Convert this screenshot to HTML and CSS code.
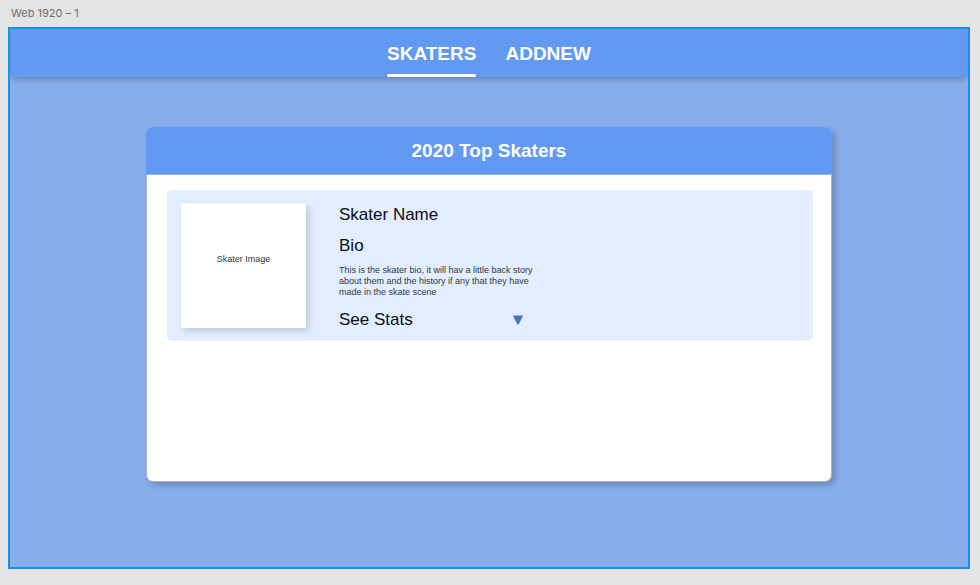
FILE: index.html
```html
<!DOCTYPE html>
<html lang="en">
<head>
<meta charset="utf-8">
<meta name="viewport" content="width=device-width, initial-scale=1">
<title>Top Skaters</title>
<link rel="stylesheet" href="styles.css">
</head>
<body>
<div class="artboard-label">Web 1920 – 1</div>
<div class="artboard">
  <header class="topbar">
    <nav class="nav">
      <a class="nav-link nav-link-active" href="#skaters" aria-current="page">SKATERS</a>
      <a class="nav-link" href="#addnew">ADDNEW</a>
    </nav>
  </header>
  <main class="card">
    <h1 class="card-title">2020 Top Skaters</h1>
    <div class="card-body">
      <article class="skater">
        <div class="skater-image">Skater Image</div>
        <div class="skater-info">
          <h2 class="skater-heading">Skater Name</h2>
          <h3 class="skater-heading">Bio</h3>
          <p class="skater-bio">This is the skater bio, it will hav a little back story about them and the history if any that they have made in the skate scene</p>
          <button class="stats-toggle" type="button">
            <span>See Stats</span>
            <svg class="stats-arrow" viewBox="0 0 10 10" aria-hidden="true"><path d="M.9.5h8.2q1.1 0 .6 1L5.8 9q-.8 1.1-1.6 0L.3 1.5Q-.2.5.9.5z"/></svg>
          </button>
        </div>
      </article>
    </div>
  </main>
</div>
</body>
</html>
```

FILE: styles.css
```css
* {
  box-sizing: border-box;
}

body {
  margin: 0;
  min-height: 100vh;
  padding: 0 10px 16px 8px;
  display: flex;
  flex-direction: column;
  background: #e4e4e4;
  color: #0b0d12;
  font-family: "Liberation Sans", Arial, sans-serif;
}

.artboard-label {
  padding: 0 3px;
  color: #6e6e6e;
  font: 11px/27px Inter, sans-serif;
}

.artboard {
  flex: 1;
  overflow: hidden;
  border: 2px solid #1592e6;
  background: #87adeb;
}

.topbar {
  border-radius: 0 0 6px 6px;
  background: #6299f3;
  box-shadow: 0 3px 6px rgba(0, 0, 0, 0.22);
}

.nav {
  display: flex;
  justify-content: center;
  gap: 29px;
}

.nav-link {
  display: block;
  position: relative;
  padding: 3px 0 2px;
  color: #fff;
  font-size: 19px;
  font-weight: 700;
  line-height: 43px;
  text-decoration: none;
}

.nav-link-active::after {
  content: "";
  position: absolute;
  right: 0;
  bottom: 0;
  left: 0;
  height: 3px;
  border-radius: 2px;
  background: #fff;
}

.card {
  width: 71.6%;
  min-height: 355px;
  margin: 50px auto 0;
  border: 1px solid #a9b3c4;
  border-top: 0;
  border-radius: 7px;
  background: #fff;
  box-shadow: 3px 3px 6px rgba(0, 0, 0, 0.22);
}

.card-title {
  margin: 0 -1px;
  border-bottom: 1px solid #a9b3c4;
  border-radius: 7px 7px 0 0;
  background: #6299f3;
  color: #fff;
  font-size: 19px;
  line-height: 47px;
  text-align: center;
}

.card-body {
  padding: 15px 18px 15px 20px;
}

.skater {
  display: flex;
  gap: 33px;
  padding: 13px 14px 9px;
  border-radius: 5px;
  background: #e2eeff;
}

.skater-image {
  display: grid;
  place-items: center;
  width: 125px;
  height: 125px;
  padding-bottom: 14px;
  background: #fff;
  box-shadow: 3px 3px 6px rgba(0, 0, 0, 0.16);
  color: #33363b;
  font-size: 9px;
}

.skater-info {
  width: 202px;
}

.skater-heading {
  margin: 0 0 7px;
  font-size: 17px;
  font-weight: 400;
  line-height: 24px;
}

.skater-bio {
  margin: 0 0 10px;
  color: #33363b;
  font-size: 9px;
  line-height: 11px;
}

.stats-toggle {
  display: flex;
  align-items: center;
  justify-content: space-between;
  width: 100%;
  padding: 0 18px 0 0;
  border: 0;
  background: none;
  color: inherit;
  font: inherit;
  font-size: 17px;
  line-height: 24px;
  cursor: pointer;
}

.stats-arrow {
  width: 10px;
  height: 10px;
  fill: #4674c1;
}
```
